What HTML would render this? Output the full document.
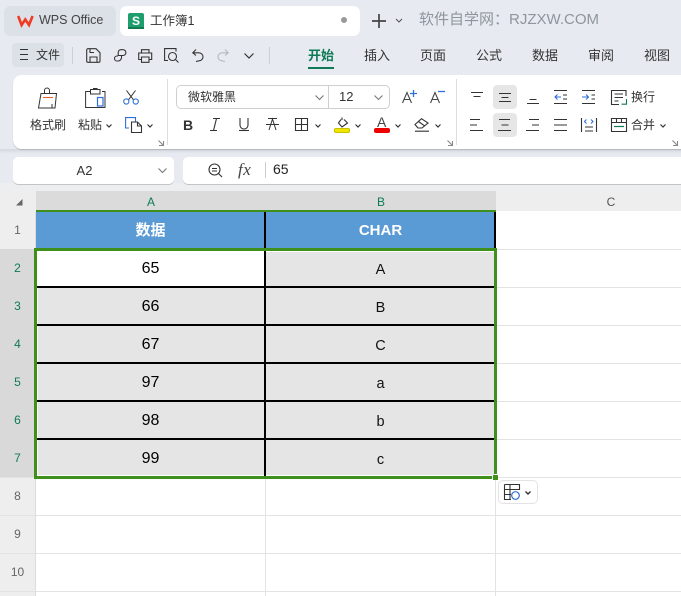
<!DOCTYPE html>
<html><head><meta charset="utf-8"><style>
*{box-sizing:border-box}
html,body{margin:0;padding:0;width:681px;height:596px;overflow:hidden;background:#fff}
body{position:relative;font-family:"Liberation Sans","Microsoft YaHei","Noto Sans CJK SC",sans-serif;color:#333}
.a{position:absolute}
.t{position:absolute;white-space:nowrap;line-height:16px}
.c{position:absolute;text-align:center;white-space:nowrap}
svg{position:absolute;overflow:visible;fill:none;stroke:#333;stroke-width:1.1}
</style></head><body>
<div class="a" style="left:0;top:0;width:681px;height:191px;background:#e7ebf1"></div>
<div class="a" style="left:0;top:149px;width:681px;height:8px;background:linear-gradient(#d5d9de,#e7ebf1 60%)"></div>
<div class="a" style="left:0;top:183px;width:681px;height:8px;background:#eceef0"></div>
<!-- tabs -->
<div class="a" style="left:4px;top:6px;width:112px;height:30px;background:#dce0e7;border-radius:7px"></div>
<svg style="left:17px;top:14px" width="17" height="13" viewBox="0 0 17 13"><path d="M1.200 2 L4.600 11 L8.300 5.500 L12 11 L15.600 2" stroke="#ef3b24" stroke-width="2.600"/></svg>
<div class="t" style="left:39px;top:12px;font-size:12.500px;color:#444">WPS Office</div>
<div class="a" style="left:120px;top:6px;width:240px;height:30px;background:#fff;border-radius:7px"></div>
<div class="a" style="left:128px;top:13px;width:16px;height:16px;background:#1f9e6d;border-radius:2px;color:#fff;font:bold 12px/16px 'Liberation Sans';text-align:center">S</div>
<div class="a" style="left:128px;top:27px;width:16px;height:2px;background:#137a52"></div>
<div class="t" style="left:150px;top:13px;font-size:12.500px;color:#333">工作簿1</div>
<div class="a" style="left:341px;top:17px;width:6px;height:6px;background:#999;border-radius:50%"></div>
<svg style="left:372px;top:14px" width="14" height="14"><path d="M0 7H14M7 0V14" stroke-width="1.700" stroke="#444"/></svg>
<svg style="left:395px;top:18px" width="8" height="5"><path d="M1 1L4 4L7 1" stroke="#555"/></svg>
<div class="t" style="left:419px;top:12px;font-size:15px;color:#8f959c">软件自学网：RJZXW.COM</div>
<!-- menu row -->
<div class="a" style="left:12px;top:43px;width:52px;height:24px;background:#dce0e7;border-radius:4px"></div>
<svg style="left:20px;top:49px" width="9" height="11"><path d="M0 .5H8M0 5.500H8M0 10.500H8"/></svg>
<div class="t" style="left:36px;top:47px;font-size:12px">文件</div>
<div class="a" style="left:72px;top:47px;width:1px;height:17px;background:#ccd0d6"></div>
<svg style="left:86px;top:48px" width="15" height="15" viewBox="0 0 15 15"><path d="M2 .7H10L14 4.700V13A1.300 1.300 0 0 1 12.700 14.300H2A1.300 1.300 0 0 1 .7 13V2A1.300 1.300 0 0 1 2 .7ZM4 14V9H11V14M4 1V4.500H8" stroke-width="1.100"/></svg>
<svg style="left:114px;top:49px" width="12" height="13" viewBox="0 0 12 13"><path d="M4 6.500H9A2.800 2.800 0 0 0 9 .7H7A2.800 2.800 0 0 0 4.200 3.500V6.500M7.500 6.500V8.500A3.500 3.500 0 0 1 4 12H3A2.500 2.500 0 0 1 3 7H4" stroke-width="1.100"/></svg>
<svg style="left:138px;top:49px" width="15" height="14" viewBox="0 0 15 14"><path d="M3.500 4V.7H11V4M3.500 10.500H.7V4H13.700V10.500H11M3.500 8H11V13.300H3.500Z" stroke-width="1.100"/></svg>
<svg style="left:164px;top:48px" width="15" height="15" viewBox="0 0 15 15"><path d="M4 12.500H.6V.6H12V3.500" stroke-width="1.100"/><circle cx="8.500" cy="8.500" r="4" stroke-width="1.100"/><path d="M11.500 11.500L14.500 14.500" stroke-width="1.100"/></svg>
<svg style="left:192px;top:49px" width="11" height="13" viewBox="0 0 11 13"><path d="M4 .5L.8 3.800L4 6.500M1 3.800H7A3.500 3.500 0 0 1 7 11.800L4 12.500" stroke-width="1.100"/></svg>
<svg style="left:218px;top:49px" width="11" height="13" viewBox="0 0 11 13"><path d="M7 .5L10.200 3.800L7 6.500M10 3.800H4A3.500 3.500 0 0 0 4 11.800L7 12.500" stroke="#b5b9bf" stroke-width="1.100"/></svg>
<svg style="left:244px;top:53px" width="11" height="6"><path d="M.5 .5L5 5L9.500 .5" stroke-width="1.200"/></svg>
<div class="a" style="left:269px;top:47px;width:1px;height:17px;background:#ccd0d6"></div>
<div class="t" style="left:308px;top:48px;font-size:13px;font-weight:bold;color:#0e7a55">开始</div>
<div class="a" style="left:308px;top:67px;width:26px;height:2px;background:#0e7a55"></div>
<div class="t" style="left:364px;top:48px;font-size:13px">插入</div>
<div class="t" style="left:420px;top:48px;font-size:13px">页面</div>
<div class="t" style="left:476px;top:48px;font-size:13px">公式</div>
<div class="t" style="left:532px;top:48px;font-size:13px">数据</div>
<div class="t" style="left:588px;top:48px;font-size:13px">审阅</div>
<div class="t" style="left:644px;top:48px;font-size:13px">视图</div>
<!-- ribbon -->
<div class="a" style="left:13px;top:75px;width:680px;height:74px;background:#fff;border-radius:9px;box-shadow:0 1px 1px rgba(0,0,0,.18)"></div>
<div class="a" style="left:167px;top:79px;width:1px;height:66px;background:#dcdcdc"></div>
<div class="a" style="left:456px;top:79px;width:1px;height:66px;background:#dcdcdc"></div>
<!-- clipboard -->
<svg style="left:38px;top:88px" width="20" height="21" viewBox="0 0 20 21"><path d="M6.500 6V2.500A2.500 2.500 0 0 1 11.500 2.500V6M3 5.500H18.500L17 20H.5Z" stroke-width="1"/><path d="M14 20V16" stroke-width="1"/><path d="M5 9.500H15" stroke="#e0622a" stroke-width="1.100"/></svg>
<div class="t" style="left:30px;top:117px;font-size:12px">格式刷</div>
<svg style="left:85px;top:88px" width="21" height="21" viewBox="0 0 21 21"><path d="M5.500 3.500H.6V19.500H20V3.500H17M5.500 1.500V6H15V1.500ZM8.500 1.500V.5H12V1.500" stroke-width="1"/><rect x="12.500" y="9.500" width="5.500" height="8.500" stroke="#2f6fd8" stroke-width="1.200"/></svg>
<div class="t" style="left:78px;top:117px;font-size:12px">粘贴</div>
<svg style="left:106px;top:124px" width="6" height="4"><path d="M.5 .5L3 3L5.500 .5" stroke-width="1.200"/></svg>
<svg style="left:123px;top:90px" width="16" height="15" viewBox="0 0 16 15"><path d="M3.500 .5L10.500 9.800M12.500 .5L5.500 9.800" stroke-width="1"/><circle cx="3.300" cy="11.500" r="2.600" stroke="#2f6fd8" stroke-width="1.100"/><circle cx="12.700" cy="11.500" r="2.600" stroke="#2f6fd8" stroke-width="1.100"/></svg>
<svg style="left:125px;top:117px" width="18" height="16" viewBox="0 0 18 16"><path d="M4 11H.6V.6H10.500V4.500" stroke="#2f6fd8" stroke-width="1.100"/><path d="M6.500 5H12.500L16.500 9V15.500H6.500ZM12.500 5V9H16.500" stroke-width="1.100"/></svg>
<svg style="left:147px;top:124px" width="6" height="4"><path d="M.5 .5L3 3L5.500 .5" stroke-width="1.200"/></svg>
<svg style="left:158px;top:140px" width="6" height="6"><path d="M.5 .5L5 5M5.500 1V5.500H1" stroke="#888"/></svg>
<!-- font -->
<div class="a" style="left:176px;top:85px;width:214px;height:24px;border:1px solid #cfcfcf;border-radius:5px"></div>
<div class="a" style="left:328px;top:85px;width:1px;height:24px;background:#cfcfcf"></div>
<div class="t" style="left:188px;top:89px;font-size:12px;color:#333">微软雅黑</div>
<svg style="left:315px;top:95px" width="9" height="5"><path d="M.5 .5L4.500 4.500L8.500 .5" stroke="#777"/></svg>
<div class="t" style="left:339px;top:89px;font-size:13px">12</div>
<svg style="left:374px;top:95px" width="9" height="5"><path d="M.5 .5L4.500 4.500L8.500 .5" stroke="#777"/></svg>
<svg style="left:402px;top:92px" width="10" height="11"><path d="M.5 11L5 .5L9.500 11M2 7.500H8" stroke="#444"/></svg>
<svg style="left:410px;top:90px" width="7" height="7"><path d="M0 3.500H7M3.500 0V7" stroke="#2f6fd8" stroke-width="1.300"/></svg>
<svg style="left:430px;top:92px" width="10" height="11"><path d="M.5 11L5 .5L9.500 11M2 7.500H8" stroke="#444"/></svg>
<svg style="left:438px;top:91px" width="7" height="2"><path d="M0 .5H7" stroke="#2f6fd8" stroke-width="1.300"/></svg>
<div class="t" style="left:183px;top:117px;font-size:14px;font-weight:bold;color:#333">B</div>
<svg style="left:210px;top:118px" width="10" height="13"><path d="M3 .5H10M0 12.500H7M6.500 .5L3.500 12.500"/></svg>
<svg style="left:239px;top:118px" width="10" height="13"><path d="M1 0V7A4 4 0 0 0 9 7V0" /><path d="M0 12.500H10" /></svg>
<svg style="left:266px;top:118px" width="13" height="13"><path d="M3 12L6.500 1L10 12M0 6.500H13M2 .5H11" stroke-width="1"/></svg>
<svg style="left:295px;top:118px" width="13" height="13"><path d="M.5 .5H12.500V12.500H.5ZM6.500 .5V12.500M.5 6.500H12.500" stroke-width="1.100"/></svg>
<svg style="left:315px;top:124px" width="6" height="4"><path d="M.5 .5L3 3L5.500 .5" stroke-width="1.200"/></svg>
<svg style="left:338px;top:117px" width="11" height="11"><path d="M4 .5V3M3 2.500L.5 6L4 10L9.500 6L6 2.500" stroke-width="1.100"/></svg>
<div class="a" style="left:334px;top:128px;width:16px;height:5px;background:#f2e600;border:1px solid #c9c000;border-radius:2px"></div>
<svg style="left:355px;top:124px" width="6" height="4"><path d="M.5 .5L3 3L5.500 .5" stroke-width="1.200"/></svg>
<div class="t" style="left:377px;top:114px;font-size:14px;color:#444">A</div>
<div class="a" style="left:374px;top:128px;width:16px;height:5px;background:#ee0000;border-radius:2px"></div>
<svg style="left:395px;top:124px" width="6" height="4"><path d="M.5 .5L3 3L5.500 .5" stroke-width="1.200"/></svg>
<svg style="left:414px;top:118px" width="16" height="14"><path d="M1 6.500L7.500 .7L14 5L8 10H4ZM4.500 3.500L10.500 7.800M1 13.200H15" stroke-width="1.100"/></svg>
<svg style="left:435px;top:124px" width="6" height="4"><path d="M.5 .5L3 3L5.500 .5" stroke-width="1.200"/></svg>
<svg style="left:447px;top:140px" width="6" height="6"><path d="M.5 .5L5 5M5.500 1V5.500H1" stroke="#888"/></svg>
<!-- align -->
<div class="a" style="left:493px;top:85px;width:24px;height:24px;background:#e6e6e6;border-radius:4px"></div>
<div class="a" style="left:493px;top:113px;width:24px;height:24px;background:#e6e6e6;border-radius:4px"></div>
<svg style="left:470px;top:92px" width="14" height="6"><path d="M1 .5H13M3.500 4.500H10.500"/></svg>
<svg style="left:498px;top:93px" width="14" height="9"><path d="M1 .5H13M3.500 4.500H10.500M1 8.500H13"/></svg>
<svg style="left:526px;top:98px" width="14" height="7"><path d="M3.500 1.500H10.500M1 5.500H13"/></svg>
<svg style="left:554px;top:90px" width="14" height="15"><path d="M0 .5H13M0 13.500H13M9 5H13M9 9H13" /><path d="M7 7H1M3.500 4.500L1 7L3.500 9.500" stroke="#2f6fd8"/></svg>
<svg style="left:582px;top:90px" width="14" height="15"><path d="M0 .5H13M0 13.500H13M9.500 5H13M9.500 9H13" /><path d="M0 7H6.500M4 4.500L6.500 7L4 9.500" stroke="#2f6fd8"/></svg>
<svg style="left:470px;top:119px" width="14" height="12"><path d="M0 .5H10M0 6H7M0 11.500H13"/></svg>
<svg style="left:498px;top:119px" width="14" height="12"><path d="M1 .5H12M3.500 6H10.500M0 11.500H13"/></svg>
<svg style="left:526px;top:119px" width="14" height="12"><path d="M3 .5H13M6 6H13M0 11.500H13"/></svg>
<svg style="left:554px;top:119px" width="14" height="12"><path d="M0 .5H13M0 6H13M0 11.500H13"/></svg>
<svg style="left:581px;top:118px" width="16" height="14"><path d="M.5 0V14M15.500 0V14M4 9H12M4 13H12"/><path d="M5.500 1.500L3.500 3.500L5.500 5.500M10 1.500L12 3.500L10 5.500" stroke="#2f6fd8"/></svg>
<svg style="left:611px;top:90px" width="16" height="15"><path d="M15 6V.5H.5V14.500H8M3.500 4H12M3.500 7.500H12M3.500 11H7.500" stroke-width="1.100"/><path d="M15.500 9V14.200H10.500" stroke="#0e7a55"/></svg>
<div class="t" style="left:631px;top:89px;font-size:12px">换行</div>
<svg style="left:611px;top:118px" width="16" height="14"><path d="M.5 .5H15.500V13.500H.5ZM.5 4.500H15.500M5.500 .5V4.500M10.500 .5V4.500" stroke-width="1.100"/><path d="M3 8.500H13" stroke="#0e7a55" stroke-width="1.200"/></svg>
<div class="t" style="left:631px;top:117px;font-size:12px">合并</div>
<svg style="left:660px;top:124px" width="6" height="4"><path d="M.5 .5L3 3L5.500 .5" stroke-width="1.200"/></svg>
<svg style="left:672px;top:140px" width="6" height="6"><path d="M.5 .5L5 5M5.500 1V5.500H1" stroke="#888"/></svg>
<!-- formula -->
<div class="a" style="left:13px;top:157px;width:161px;height:27px;background:#fff;border-radius:5px;box-shadow:0 1px 0 #c4c4c4"></div>
<div class="c" style="left:13px;top:163px;width:143px;font-size:13px;line-height:16px">A2</div>
<svg style="left:158px;top:168px" width="9" height="5"><path d="M.5 .5L4.500 4.500L8.500 .5" stroke="#777"/></svg>
<div class="a" style="left:183px;top:157px;width:520px;height:27px;background:#fff;border-radius:5px;box-shadow:0 1px 0 #c4c4c4"></div>
<svg style="left:208px;top:163px" width="15" height="15"><circle cx="6.500" cy="6.500" r="5.500"/><path d="M4 5.500H9M4 8H9M10.500 10.500L14 14"/></svg>
<div class="t" style="left:238px;top:162px;font-family:'Liberation Serif';font-style:italic;font-size:17px;letter-spacing:.5px;color:#444">fx</div>
<div class="a" style="left:265px;top:162px;width:1px;height:16px;background:#ccc"></div>
<div class="t" style="left:273px;top:161px;font-size:14px;color:#222">65</div>
<!-- grid base -->
<div class="a" style="left:0;top:191px;width:681px;height:405px;background:#fff"></div>
<div class="a" style="left:0;top:191px;width:36px;height:405px;background:#eeeeee"></div>
<div class="a" style="left:496px;top:191px;width:185px;height:20px;background:#eeeeee"></div>
<div class="a" style="left:36px;top:191px;width:460px;height:20px;background:#dbdbdb"></div>
<div class="a" style="left:0;top:249px;width:36px;height:229px;background:#d9d9d9"></div>
<svg style="left:16px;top:199px" width="7" height="7"><path d="M6.500 0V6.500H0Z" fill="#666" stroke="none"/></svg>
<div class="c" style="left:36px;top:194px;width:230px;font-size:12px;line-height:16px;color:#0e7a55">A</div>
<div class="c" style="left:266px;top:194px;width:230px;font-size:12px;line-height:16px;color:#0e7a55">B</div>
<div class="c" style="left:496px;top:194px;width:230px;font-size:12px;line-height:16px;color:#555">C</div>
<!-- light lines -->
<div class="a" style="left:496px;top:249px;width:185px;height:1px;background:#e3e3e3"></div>
<div class="a" style="left:496px;top:287px;width:185px;height:1px;background:#e3e3e3"></div>
<div class="a" style="left:496px;top:325px;width:185px;height:1px;background:#e3e3e3"></div>
<div class="a" style="left:496px;top:363px;width:185px;height:1px;background:#e3e3e3"></div>
<div class="a" style="left:496px;top:401px;width:185px;height:1px;background:#e3e3e3"></div>
<div class="a" style="left:496px;top:439px;width:185px;height:1px;background:#e3e3e3"></div>
<div class="a" style="left:0;top:477px;width:681px;height:1px;background:#e3e3e3"></div>
<div class="a" style="left:0;top:515px;width:681px;height:1px;background:#e3e3e3"></div>
<div class="a" style="left:0;top:553px;width:681px;height:1px;background:#e3e3e3"></div>
<div class="a" style="left:0;top:591px;width:681px;height:1px;background:#e3e3e3"></div>
<div class="a" style="left:265px;top:478px;width:1px;height:118px;background:#e3e3e3"></div>
<div class="a" style="left:495px;top:478px;width:1px;height:118px;background:#e3e3e3"></div>
<div class="a" style="left:35px;top:212px;width:1px;height:384px;background:#dddddd"></div>
<!-- row numbers -->
<div class="c" style="left:0;top:222px;width:35px;font-size:12px;line-height:16px;color:#666">1</div>
<div class="c" style="left:0;top:260px;width:35px;font-size:12px;line-height:16px;color:#0e7a55">2</div>
<div class="c" style="left:0;top:298px;width:35px;font-size:12px;line-height:16px;color:#0e7a55">3</div>
<div class="c" style="left:0;top:336px;width:35px;font-size:12px;line-height:16px;color:#0e7a55">4</div>
<div class="c" style="left:0;top:374px;width:35px;font-size:12px;line-height:16px;color:#0e7a55">5</div>
<div class="c" style="left:0;top:412px;width:35px;font-size:12px;line-height:16px;color:#0e7a55">6</div>
<div class="c" style="left:0;top:450px;width:35px;font-size:12px;line-height:16px;color:#0e7a55">7</div>
<div class="c" style="left:0;top:488px;width:35px;font-size:12px;line-height:16px;color:#666">8</div>
<div class="c" style="left:0;top:526px;width:35px;font-size:12px;line-height:16px;color:#666">9</div>
<div class="c" style="left:0;top:564px;width:35px;font-size:12px;line-height:16px;color:#666">10</div>
<!-- cells -->
<div class="a" style="left:36px;top:212px;width:460px;height:37px;background:#5b9bd5"></div>
<div class="a" style="left:36px;top:250px;width:459px;height:227px;background:#e5e5e5"></div>
<div class="a" style="left:37px;top:251px;width:228px;height:35px;background:#fff"></div>
<div class="a" style="left:266px;top:251px;width:228px;height:1px;background:#fff"></div>
<div class="a" style="left:37px;top:475px;width:458px;height:1px;background:#fff"></div>
<div class="a" style="left:37px;top:288px;width:1px;height:188px;background:#fff"></div>
<!-- black lines -->
<div class="a" style="left:264px;top:212px;width:2px;height:264px;background:#000"></div>
<div class="a" style="left:494px;top:212px;width:2px;height:37px;background:#000"></div>
<div class="a" style="left:37px;top:286px;width:457px;height:2px;background:#000"></div>
<div class="a" style="left:37px;top:324px;width:457px;height:2px;background:#000"></div>
<div class="a" style="left:37px;top:362px;width:457px;height:2px;background:#000"></div>
<div class="a" style="left:37px;top:400px;width:457px;height:2px;background:#000"></div>
<div class="a" style="left:37px;top:438px;width:457px;height:2px;background:#000"></div>
<!-- green -->
<div class="a" style="left:36px;top:210px;width:460px;height:2px;background:#3f8f1d"></div>
<div class="a" style="left:34px;top:248px;width:463px;height:3px;background:#3f8f1d"></div>
<div class="a" style="left:34px;top:248px;width:3px;height:231px;background:#3f8f1d"></div>
<div class="a" style="left:494px;top:248px;width:3px;height:226px;background:#3f8f1d"></div>
<div class="a" style="left:34px;top:476px;width:458px;height:3px;background:#3f8f1d"></div>
<div class="a" style="left:493px;top:475px;width:5px;height:5px;background:#3f8f1d"></div>
<!-- text -->
<div class="c" style="left:36px;top:222px;width:229px;font-size:15px;font-weight:bold;line-height:17px;color:#fff">数据</div>
<div class="c" style="left:266px;top:222px;width:229px;font-size:15px;font-weight:bold;line-height:17px;color:#fff">CHAR</div>
<div class="c" style="left:36px;top:259px;width:229px;font-size:16px;line-height:19px;color:#000">65</div>
<div class="c" style="left:36px;top:297px;width:229px;font-size:16px;line-height:19px;color:#000">66</div>
<div class="c" style="left:36px;top:335px;width:229px;font-size:16px;line-height:19px;color:#000">67</div>
<div class="c" style="left:36px;top:373px;width:229px;font-size:16px;line-height:19px;color:#000">97</div>
<div class="c" style="left:36px;top:411px;width:229px;font-size:16px;line-height:19px;color:#000">98</div>
<div class="c" style="left:36px;top:449px;width:229px;font-size:16px;line-height:19px;color:#000">99</div>
<div class="c" style="left:266px;top:261px;width:229px;font-size:14.500px;line-height:18px;color:#111">A</div>
<div class="c" style="left:266px;top:299px;width:229px;font-size:14.500px;line-height:18px;color:#111">B</div>
<div class="c" style="left:266px;top:337px;width:229px;font-size:14.500px;line-height:18px;color:#111">C</div>
<div class="c" style="left:266px;top:375px;width:229px;font-size:14.500px;line-height:18px;color:#111">a</div>
<div class="c" style="left:266px;top:413px;width:229px;font-size:14.500px;line-height:18px;color:#111">b</div>
<div class="c" style="left:266px;top:451px;width:229px;font-size:14.500px;line-height:18px;color:#111">c</div>
<!-- paste options -->
<div class="a" style="left:498px;top:480px;width:40px;height:24px;background:#fff;border:1px solid #e3e3e3;border-radius:5px"></div>
<svg style="left:504px;top:484px" width="18" height="16"><path d="M.5 .5H15.500V6M.5 .5V15.500H7M.5 5.500H15.500M.5 10.500H7M6 .5V15.500" stroke-width="1.100"/><circle cx="11.500" cy="11.500" r="3.800" stroke="#2f6fd8" stroke-width="1.200"/></svg>
<svg style="left:525px;top:491px" width="6" height="4"><path d="M.5 .5L3 3L5.500 .5" stroke-width="1.400"/></svg>
</body></html>
